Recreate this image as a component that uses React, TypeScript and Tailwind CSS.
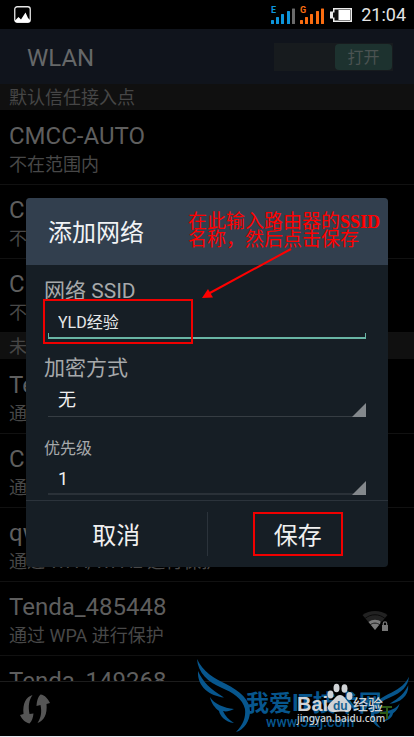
import React from "react";

const FONT = "font-['Roboto','Noto_Sans_CJK_SC',sans-serif]";

function Signal({ letter, color, last, label }: { letter: string; color: string; last: string; label: string }) {
  return (
    <svg width="25" height="18" viewBox="0 0 25 18" role="img" aria-label={label}>
      <text x="0" y="7" fontSize="9" fontWeight="700" fill={color}>
        {letter}
      </text>
      <g fill={color}>
        <rect x="0" y="14" width="3" height="4" rx="0.5" />
        <rect x="5" y="11" width="3" height="7" rx="0.5" />
        <rect x="10" y="8" width="3" height="10" rx="0.5" />
        <rect x="16" y="5" width="3" height="13" rx="0.5" />
        <rect x="21" y="2.5" width="3" height="15.5" rx="0.5" fill={last} />
      </g>
    </svg>
  );
}

function StatusBar() {
  return (
    <div className="flex h-[29px] items-center justify-between pl-[14px] pr-2">
      <svg width="17" height="17" viewBox="0 0 17 17" role="img" aria-label="图片">
        <rect x="0.75" y="0.75" width="15.5" height="15.5" rx="2.5" fill="none" stroke="#e8e8e8" strokeWidth="1.3" />
        <path d="M1 16V14.500L4.500 11L7 13.500L11.500 6.500L14 12L16 14V16Z" fill="#fff" />
      </svg>
      <div className="flex items-center gap-1">
        <Signal letter="E" color="#0d96dc" last="#6a6a6a" label="E 信号" />
        <Signal letter="G" color="#fb6d10" last="#fb6d10" label="G 信号" />
        <svg width="24" height="16" viewBox="0 0 24 16" role="img" aria-label="电池">
          <path d="M4 1H23V15H4V11.5H1V4.5H4Z" fill="#ececec" />
          <path d="M5.5 2.5H21.500V13.500H5.5V10.5H4V5.5H5.5Z" fill="#111" />
          <rect x="9.5" y="3" width="11.5" height="10" fill="#fff" />
        </svg>
        <span className="ml-1 text-lg text-[#e4e4e4]">21:04</span>
      </div>
    </div>
  );
}

function SectionTitle({ children }: { children: React.ReactNode }) {
  return <h2 className="h-[26px] bg-[#101010] px-[9px] text-lg leading-[28px] text-[#464646]">{children}</h2>;
}

function WifiLock() {
  return (
    <svg width="27" height="22" viewBox="0 0 27 22" aria-hidden="true">
      <path d="M0.5 5C7.500 -0.500 18.500 -0.500 25.500 5L13 20Z" fill="#222" />
      <path d="M3 8.500C9 3.500 17 3.500 23 8.500" fill="none" stroke="#0a0a0a" />
      <path d="M6.500 12C10.500 9 15.500 9 19.500 12L13 20Z" fill="#7b7b7b" />
      <path d="M8 15C11 12.500 15 12.500 18 15" fill="none" stroke="#1a1a1a" />
      <path d="M18.500 11.500H27V22H18.500Z" fill="#000" />
      <rect x="20" y="15" width="6" height="6" fill="#777" />
      <path d="M21.300 15V13.500A1.700 1.700 0 0 1 24.700 13.500V15" fill="none" stroke="#777" strokeWidth="1.2" />
    </svg>
  );
}

function Network({ name, note, icon }: { name: string; note: string; icon?: boolean }) {
  return (
    <li className="h-[74px] border-b border-[#111]">
      <button type="button" className="flex h-full w-full items-center justify-between pl-[9px] pr-[25px] pt-[5px] text-left">
        <span>
          <span className="block text-2xl leading-[30px] text-[#5e5e5e]">{name}</span>
          <span className="block text-lg leading-[28px] text-[#484848]">{note}</span>
        </span>
        {icon && <WifiLock />}
      </button>
    </li>
  );
}

function Corner() {
  return (
    <svg
      className="pointer-events-none absolute bottom-0 right-0"
      width="14"
      height="14"
      viewBox="0 0 14 14"
      aria-hidden="true"
    >
      <path d="M14 0V14H0Z" fill="#83888c" />
    </svg>
  );
}

function Dialog() {
  return (
    <div
      role="dialog"
      aria-labelledby="dialog-title"
      className="absolute inset-x-[26px] top-[198px] overflow-hidden rounded bg-[#161e25]"
    >
      <h2 id="dialog-title" className="h-[67px] bg-[#323f4e] px-[22px] pt-1 text-2xl leading-[63px] text-[#f1f3f5]">
        添加网络
      </h2>
      <form onSubmit={(e) => e.preventDefault()}>
        <div className="px-[18px] pb-[5px] pt-[10px]">
          <label htmlFor="ssid" className="block pt-1 text-[21px] leading-6 text-[#a6a9ab]">
            网络 SSID
          </label>
          <div className="relative mx-1">
            <input
              id="ssid"
              defaultValue="YLD经验"
              className="block h-9 w-full bg-transparent px-[10px] text-base text-[#e6e8e9] outline-none"
            />
            <span className="pointer-events-none absolute inset-x-0 bottom-0 h-[6px] border-x border-b-2 border-[#69b5a5]" />
            <span className="pointer-events-none absolute -left-[5px] -top-1 h-[45px] w-[150px] border-2 border-[#f00000]" />
          </div>
          <label htmlFor="security" className="mt-[13px] block pt-1 text-[21px] leading-6 text-[#a6a9ab]">
            加密方式
          </label>
          <div className="relative mx-1">
            <select
              id="security"
              className="block h-[37px] w-full appearance-none border-b border-[#363d43] bg-transparent px-[10px] pt-1 text-lg text-[#f0f0f0] outline-none"
            >
              <option>无</option>
            </select>
            <Corner />
          </div>
          <label htmlFor="priority" className="mt-4 block pt-1 text-base leading-6 text-[#a6a9ab]">
            优先级
          </label>
          <div className="relative mx-1">
            <select
              id="priority"
              className="block h-[34px] w-full appearance-none border-b-2 border-[#2a3138] bg-transparent px-[10px] pt-1 text-lg text-[#f0f0f0] outline-none"
            >
              <option>1</option>
            </select>
            <Corner />
          </div>
        </div>
        <div className="flex h-[67px] items-center border-t border-[#2b333b] text-2xl text-[#f0f0f0]">
          <button type="button" className="h-full flex-1 pt-1">
            取消
          </button>
          <span className="h-11 w-px bg-[#2b333b]" />
          <button type="submit" className="flex h-full flex-1 items-center justify-center">
            <span className="flex h-11 w-[90px] items-center justify-center border-2 border-[#f00000] pt-1">保存</span>
          </button>
        </div>
      </form>
    </div>
  );
}

function Note() {
  return (
    <>
      <p className="absolute left-[188px] top-[213px] whitespace-nowrap font-['Liberation_Serif','Noto_Sans_CJK_SC',serif] text-[19px] leading-[18px] text-[#ff0000]">
        在此输入路由器的<span className="text-lg font-bold leading-[18px]">SSID</span>
        <br />
        名称，然后点击保存
      </p>
      <svg
        className="pointer-events-none absolute left-[200px] top-[246px]"
        width="94"
        height="54"
        viewBox="0 0 94 54"
        aria-hidden="true"
      >
        <path d="M91 3L8 48" stroke="#f00" strokeWidth="2" />
        <path d="M2 52L8 43L13 51.500Z" fill="#f00" />
      </svg>
    </>
  );
}

function Wing() {
  return (
    <>
      <path d="M7 4C13 17 24 23 36 29C50 36 60 45 60 56C60 66 54 75 46 77C53 70 56 62 55 54C53 44 42 37 32 33C18 27 8 18 7 4Z" />
      <path d="M8 16C13 27 20 34 34 42.500C20 41 7 32 8 16Z" />
      <path d="M20 42C24 49 34 53 44 54C40 56 36 57 33 56C35 61 39 65 44 68C35 67 30 61 29 56C25 53 21 48 20 42Z" />
    </>
  );
}

function Watermark() {
  return (
    <svg
      className="pointer-events-none absolute bottom-0 right-0"
      width="224"
      height="82"
      viewBox="0 0 224 82"
      role="img"
      aria-label="水印"
    >
      <g fill="#07568d">
        <Wing />
        <g transform="translate(224 19) scale(-0.72 0.7)">
          <Wing />
        </g>
        <text x="56" y="56" fontSize="23" fontWeight="700">
          我爱IT技术网
        </text>
        <text x="76" y="72" fontSize="14" fontWeight="500">
          www.52ij.com
        </text>
      </g>
      <path d="M190 52H202M190 58H197M197 53V64" stroke="#2c5a16" strokeWidth="2" fill="none" />
      <g fill="#d0d3d6">
        <text className="font-['Liberation_Sans',sans-serif]" x="107" y="56" fontSize="20" fontWeight="700">
          Bai
        </text>
        <ellipse cx="140.500" cy="39.500" rx="3" ry="4" />
        <ellipse cx="146.500" cy="33" rx="3" ry="4.300" />
        <ellipse cx="154.500" cy="33.500" rx="3" ry="4.300" />
        <ellipse cx="159.500" cy="41" rx="3" ry="4" />
        <path d="M150 40C146 40 144 45 140 48C136 52 138 57 143 57C147 57 153 56 156 57C161 58 163 52 160 49C156 45 154 40 150 40Z" />
        <text x="163" y="55" fontSize="15" fontWeight="500">
          经验
        </text>
        <text className="font-['Noto_Sans',sans-serif]" x="107" y="67" fontSize="10" fontWeight="500">
          jingyan.baidu.com
        </text>
      </g>
      <text className="font-['Liberation_Sans',sans-serif]" x="143" y="55" fontSize="12" fontWeight="700" fill="#17618f">
        du
      </text>
    </svg>
  );
}

export default function App() {
  return (
    <main className={`relative flex min-h-[737px] flex-col overflow-hidden bg-black ${FONT}`}>
      <StatusBar />
      <header className="flex h-[55px] items-center justify-between bg-[#10141c] pl-[27px] pr-[21px]">
        <h1 className="pt-0.5 text-2xl text-[#666869]">WLAN</h1>
        <button
          type="button"
          role="switch"
          aria-checked="true"
          className="flex h-7 w-[119px] justify-end bg-[#171b1e] p-px"
        >
          <span className="h-[26px] w-[57px] rounded-sm bg-[#1d322f] text-base leading-[28px] text-[#4b5352]">打开</span>
        </button>
      </header>
      <div className="h-[597px] overflow-hidden">
        <SectionTitle>默认信任接入点</SectionTitle>
        <ul className="pt-px">
          <Network name="CMCC-AUTO" note="不在范围内" />
          <Network name="CMCC" note="不在范围内" />
          <Network name="CMCC" note="不在范围内" />
        </ul>
        <SectionTitle>未信任接入点</SectionTitle>
        <ul className="pt-px">
          <Network name="Tenda" note="通过 WPA 进行保护" />
          <Network name="CMCC" note="通过 WPA 进行保护" />
          <Network name="qw" note="通过 WPA/WPA2 进行保护" />
          <Network name="Tenda_485448" note="通过 WPA 进行保护" icon />
          <Network name="Tenda_149268" note="通过 WPA 进行保护" />
        </ul>
      </div>
      <footer className="flex grow items-center border-y border-t-[#1c1c1c] border-b-[#e8e8f0] px-5">
        <button type="button" aria-label="WPS">
          <svg width="30" height="30" viewBox="0 0 30 30" aria-hidden="true">
            <g fill="#555">
              <path d="M12.500 1C6 3 2.500 9 3.500 20L0 21C2 25 5 28.500 9.500 29.500C12 27 13 24 13.500 19.500L9.500 20C8 12 9 6 12.500 1Z" />
              <path d="M17.500 29C24 27 27.500 20 26.500 10L30 9C28 5 25 1 20.500 0.500C18 3 17 6 16.500 12L20.500 11C22 18 21 24 17.500 29Z" />
            </g>
          </svg>
        </button>
      </footer>
      <Dialog />
      <Note />
      <Watermark />
    </main>
  );
}
